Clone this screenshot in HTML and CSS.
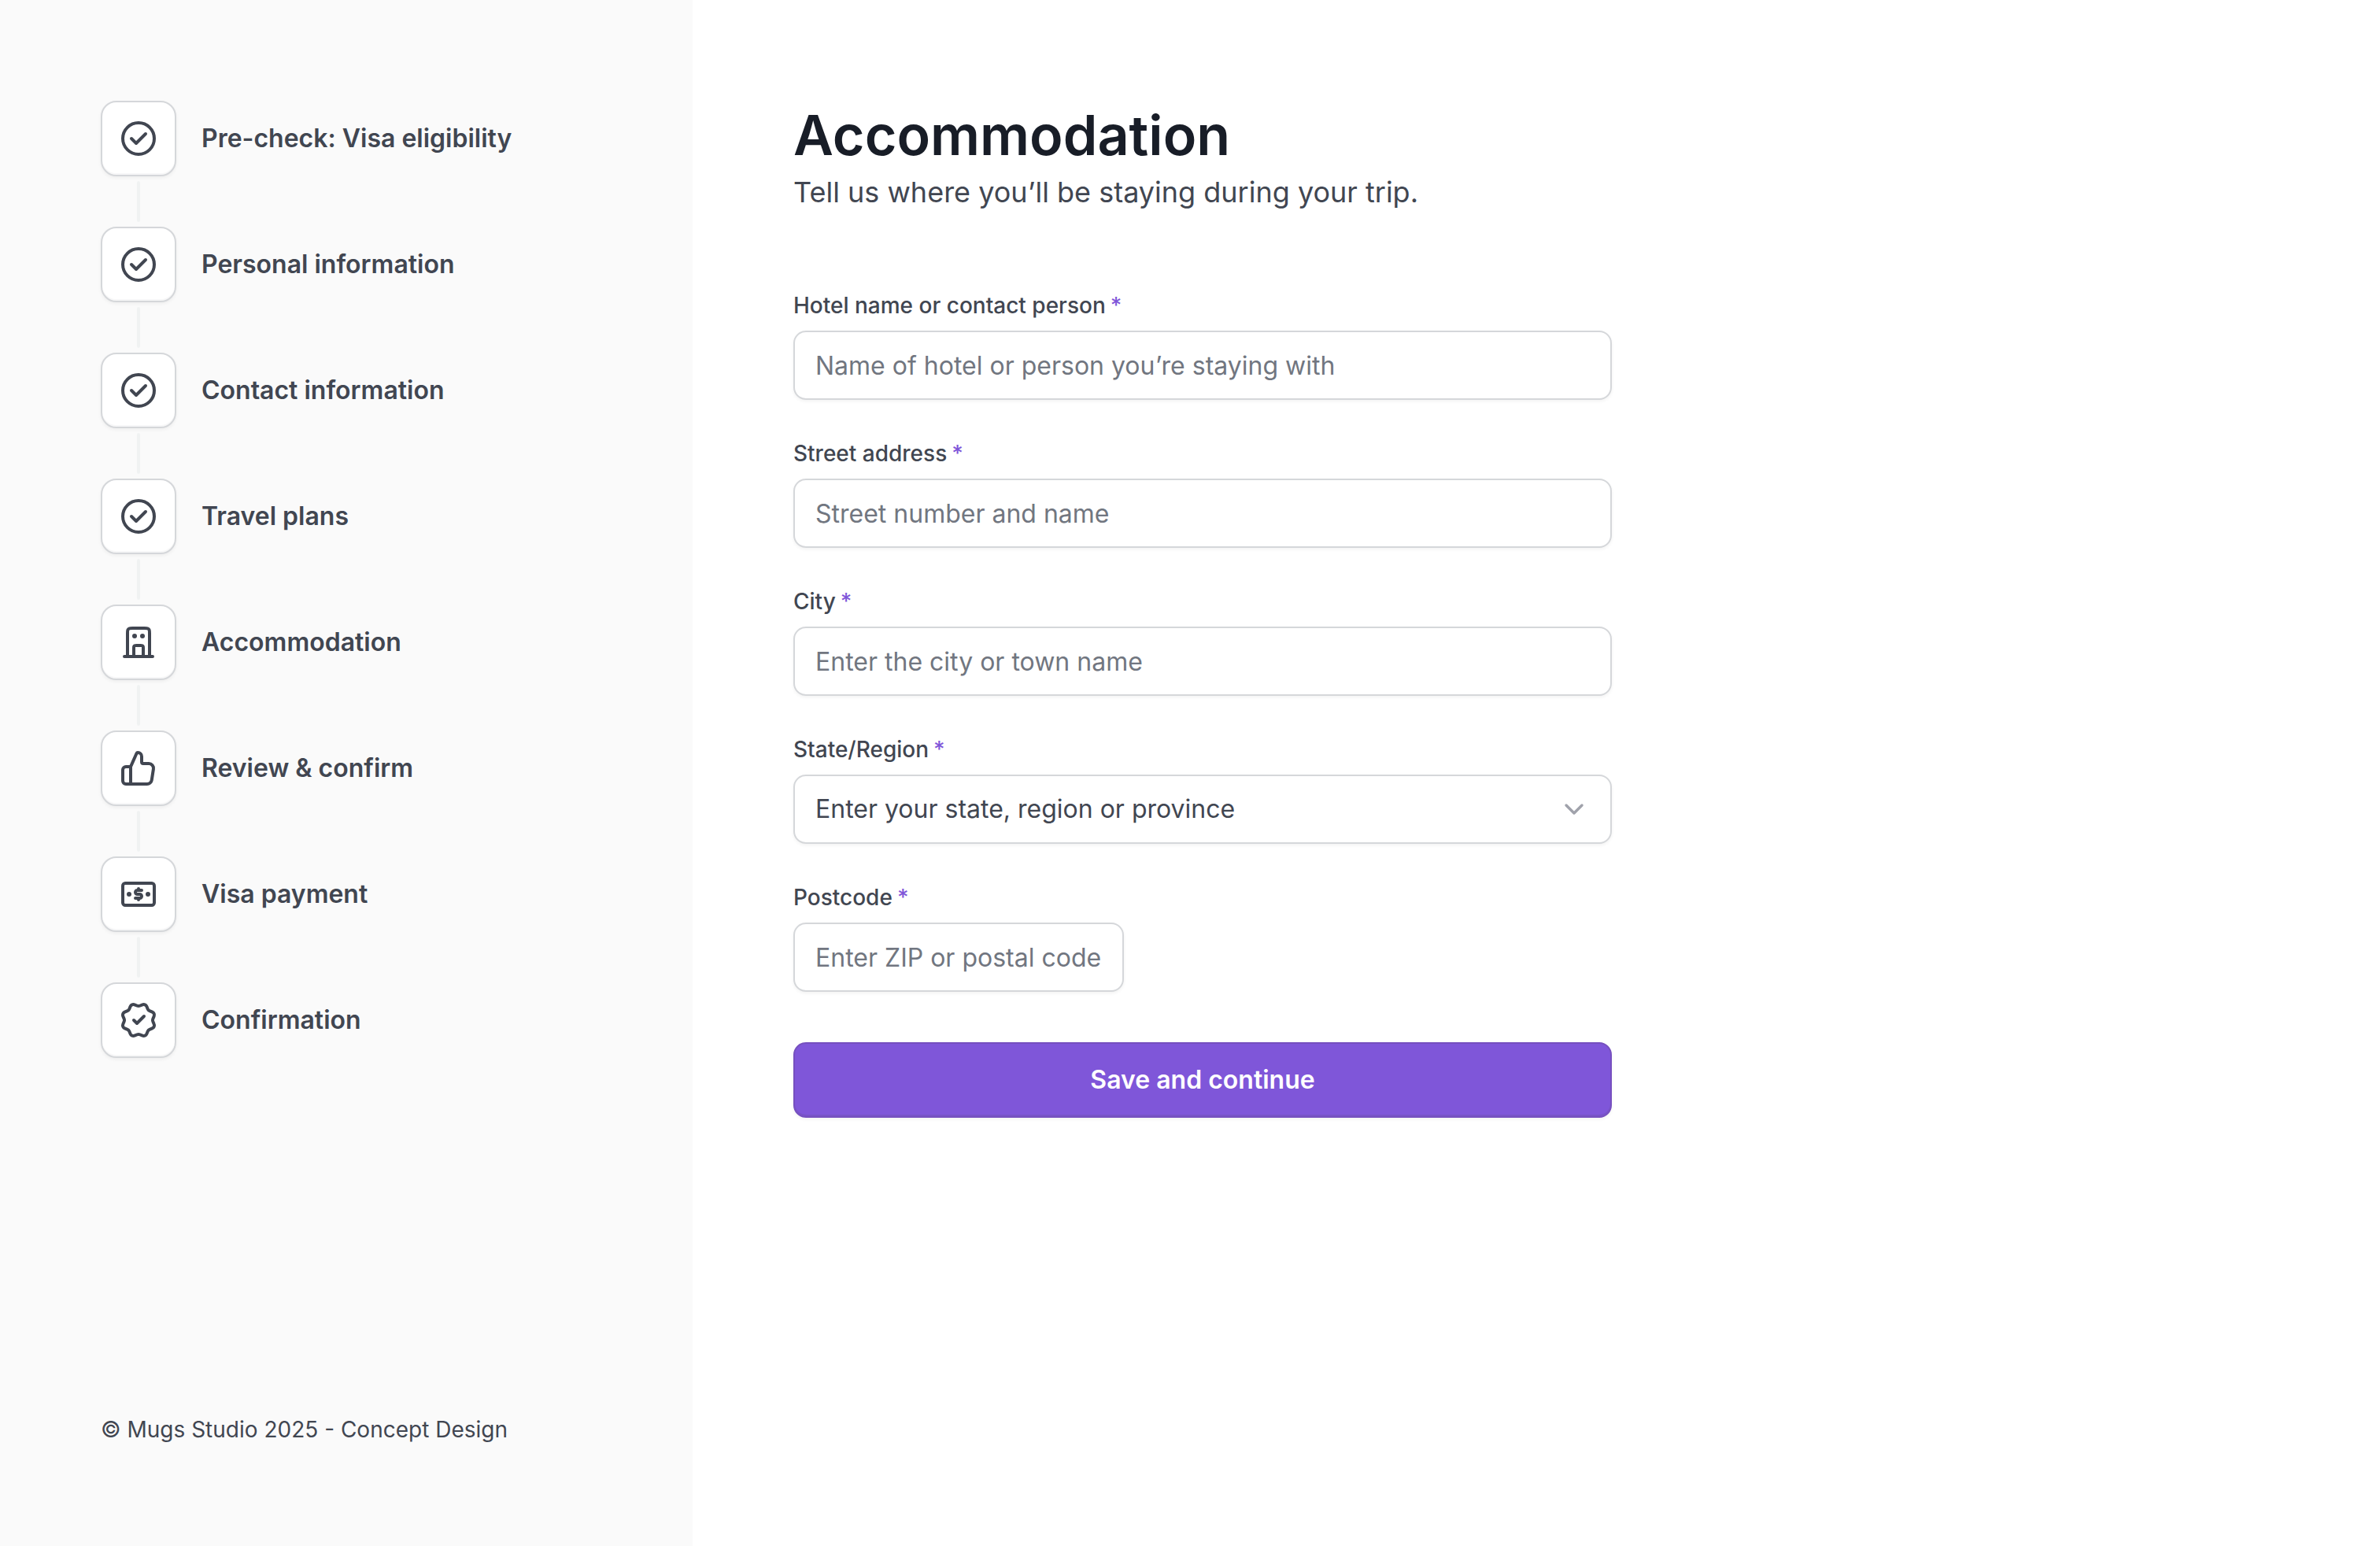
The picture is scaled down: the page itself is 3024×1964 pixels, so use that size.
FILE: index.html
```html
<!DOCTYPE html>
<html lang="en">
<head>
<meta charset="utf-8">
<meta name="viewport" content="width=device-width, initial-scale=1">
<title>Accommodation</title>
<link rel="stylesheet" href="styles.css">
</head>
<body>
<svg class="sprite" aria-hidden="true">
  <symbol id="check-circle" viewBox="0 0 24 24"><circle cx="12" cy="12" r="10"/><path d="M7.5 12l3 3 6-6"/></symbol>
  <symbol id="building" viewBox="0 0 24 24"><path d="M15 21v-5.4c0-.56 0-.84-.11-1.05a1 1 0 0 0-.44-.44C14.24 14 13.96 14 13.4 14h-2.8c-.56 0-.84 0-1.05.11a1 1 0 0 0-.44.44C9 14.76 9 15.04 9 15.6V21M19 21V6.2c0-1.12 0-1.68-.22-2.11a2 2 0 0 0-.87-.87C17.48 3 16.92 3 15.8 3H8.2c-1.12 0-1.68 0-2.11.22a2 2 0 0 0-.87.87C5 4.52 5 5.08 5 6.2V21M21 21H3"/><circle class="dot" cx="9.5" cy="8" r="1.5"/><circle class="dot" cx="14.5" cy="8" r="1.5"/></symbol>
  <symbol id="thumbs-up" viewBox="0 0 24 24"><path d="M7 22V11M2 13v7a2 2 0 0 0 2 2h13.43a3 3 0 0 0 2.96-2.54l1.08-7A3 3 0 0 0 18.5 9H15a1 1 0 0 1-1-1V4.47A2.47 2.47 0 0 0 11.53 2a.82.82 0 0 0-.75.49l-3.52 7.92A1 1 0 0 1 6.35 11H4a2 2 0 0 0-2 2z"/></symbol>
  <symbol id="bank-note" viewBox="0 0 24 24"><rect x="2" y="5" width="20" height="14" rx="1.6"/><path d="M14 9.5h-2.75a1.25 1.25 0 0 0 0 2.5h1.5a1.25 1.25 0 0 1 0 2.5H10M12 8.5v1M12 14.5v1"/><circle class="dot" cx="6" cy="12" r="1.5"/><circle class="dot" cx="18" cy="12" r="1.5"/></symbol>
  <symbol id="check-verified" viewBox="0 0 24 24"><path d="M9 12L11 14L15.5 9.5M17.9 5C18.11 5.5 18.5 5.89 19 6.1L20.75 6.82C21.24 7.03 21.64 7.42 21.85 7.92C22.05 8.42 22.05 8.98 21.85 9.48L21.12 11.22C20.92 11.72 20.92 12.28 21.12 12.78L21.84 14.52C21.95 14.77 22 15.03 22 15.3C22 15.57 21.95 15.83 21.84 16.08C21.74 16.32 21.59 16.55 21.4 16.74C21.22 16.93 20.99 17.08 20.74 17.18L19 17.9C18.5 18.11 18.11 18.5 17.9 19L17.18 20.75C16.97 21.24 16.58 21.64 16.08 21.85C15.58 22.05 15.02 22.05 14.52 21.85L12.78 21.12C12.28 20.92 11.72 20.92 11.22 21.12L9.48 21.85C8.98 22.05 8.42 22.05 7.92 21.85C7.42 21.64 7.03 21.24 6.82 20.75L6.1 19C5.89 18.5 5.5 18.11 5 17.9L3.26 17.18C2.76 16.97 2.36 16.58 2.16 16.08C1.95 15.58 1.95 15.02 2.16 14.52L2.88 12.78C3.08 12.28 3.08 11.72 2.88 11.22L2.15 9.48C2.05 9.23 2 8.97 2 8.7C2 8.43 2.05 8.17 2.15 7.92C2.26 7.67 2.41 7.45 2.6 7.26C2.78 7.07 3.01 6.92 3.26 6.82L5 6.1C5.5 5.89 5.89 5.5 6.1 5L6.82 3.25C7.03 2.76 7.42 2.36 7.92 2.15C8.42 1.95 8.98 1.95 9.48 2.15L11.22 2.88C11.72 3.08 12.28 3.08 12.78 2.88L14.52 2.16C15.02 1.95 15.58 1.95 16.08 2.16C16.58 2.36 16.97 2.76 17.18 3.26Z"/></symbol>
</svg>
<div class="page">
  <aside class="sidebar">
    <nav aria-label="Application steps">
      <ol class="steps">
        <li class="step"><span class="step-icon"><svg class="icon"><use href="#check-circle"/></svg></span><span class="step-label">Pre-check: Visa eligibility</span></li>
        <li class="step"><span class="step-icon"><svg class="icon"><use href="#check-circle"/></svg></span><span class="step-label">Personal information</span></li>
        <li class="step"><span class="step-icon"><svg class="icon"><use href="#check-circle"/></svg></span><span class="step-label">Contact information</span></li>
        <li class="step"><span class="step-icon"><svg class="icon"><use href="#check-circle"/></svg></span><span class="step-label">Travel plans</span></li>
        <li class="step" aria-current="step"><span class="step-icon"><svg class="icon"><use href="#building"/></svg></span><span class="step-label">Accommodation</span></li>
        <li class="step"><span class="step-icon"><svg class="icon"><use href="#thumbs-up"/></svg></span><span class="step-label">Review &amp; confirm</span></li>
        <li class="step"><span class="step-icon"><svg class="icon"><use href="#bank-note"/></svg></span><span class="step-label">Visa payment</span></li>
        <li class="step"><span class="step-icon"><svg class="icon"><use href="#check-verified"/></svg></span><span class="step-label">Confirmation</span></li>
      </ol>
    </nav>
    <footer class="copyright">© Mugs Studio 2025 - Concept Design</footer>
  </aside>
  <main class="main">
    <header>
      <h1 class="title">Accommodation</h1>
      <p class="subtitle">Tell us where you’ll be staying during your trip.</p>
    </header>
    <form class="form">
      <div class="field">
        <label class="label" for="hotel">Hotel name or contact person<span class="required">*</span></label>
        <input class="control" id="hotel" type="text" placeholder="Name of hotel or person you’re staying with">
      </div>
      <div class="field">
        <label class="label" for="street">Street address<span class="required">*</span></label>
        <input class="control" id="street" type="text" placeholder="Street number and name">
      </div>
      <div class="field">
        <label class="label" for="city">City<span class="required">*</span></label>
        <input class="control" id="city" type="text" placeholder="Enter the city or town name">
      </div>
      <div class="field">
        <label class="label" for="region">State/Region<span class="required">*</span></label>
        <div class="select-wrap">
          <select class="control select" id="region"><option>Enter your state, region or province</option></select>
          <svg class="chevron" viewBox="0 0 20 20" aria-hidden="true"><path d="M5 7.5l5 5 5-5"/></svg>
        </div>
      </div>
      <div class="field">
        <label class="label" for="postcode">Postcode<span class="required">*</span></label>
        <input class="control control-short" id="postcode" type="text" placeholder="Enter ZIP or postal code">
      </div>
      <button class="submit" type="submit">Save and continue</button>
    </form>
  </main>
</div>
</body>
</html>
```
FILE: styles.css
```css
*, *::before, *::after { box-sizing: border-box; }

body {
  margin: 0;
  background: #fff;
  color: #414651;
  font-family: Inter, "Liberation Sans", sans-serif;
  font-size: 32px;
  line-height: 48px;
}

.sprite { display: none; }

.page { display: flex; min-height: 100vh; }

.sidebar {
  display: flex;
  flex: 0 0 880px;
  flex-direction: column;
  justify-content: space-between;
  gap: 64px;
  padding: 128px;
  background: #fafafa;
}

.steps {
  display: flex;
  flex-direction: column;
  gap: 64px;
  margin: 0;
  padding: 0;
  list-style: none;
}

.step { display: flex; align-items: center; gap: 32px; }

.step-icon {
  position: relative;
  display: grid;
  place-items: center;
  width: 96px;
  height: 96px;
  border: 2px solid #d5d7da;
  border-radius: 20px;
  background: #fff;
  box-shadow: 0 2px 4px rgba(10, 13, 18, 0.05), inset 0 -2px 0 rgba(10, 13, 18, 0.03);
}

/* connector between two steps */
.step:not(:last-child) .step-icon::after {
  content: "";
  position: absolute;
  top: 100px;
  left: 44px;
  width: 4px;
  height: 52px;
  border-radius: 2px;
  background: #f0f2f2;
}

.icon {
  width: 48px;
  height: 48px;
  fill: none;
  stroke: #414651;
  stroke-width: 2;
  stroke-linecap: round;
  stroke-linejoin: round;
}

.dot { fill: #414651; stroke: none; }

.step-label { font-weight: 600; }

.copyright { font-size: 28px; line-height: 40px; }

.main { flex: 1; min-width: 0; padding: 128px; }

.title {
  margin: 0;
  color: #181d27;
  font-size: 70px;
  font-weight: 600;
  line-height: 88px;
}

.subtitle { margin: 0; font-size: 36px; line-height: 56px; }

.form {
  display: flex;
  flex-direction: column;
  gap: 48px;
  max-width: 1040px;
  margin-top: 96px;
}

.field { display: flex; flex-direction: column; gap: 12px; }

.label {
  display: flex;
  gap: 6px;
  font-size: 28px;
  font-weight: 500;
  line-height: 40px;
}

.required { color: #7f56d9; }

.control {
  width: 100%;
  height: 88px;
  padding: 0 26px;
  border: 2px solid #d5d7da;
  border-radius: 16px;
  background: #fff;
  box-shadow: 0 2px 4px rgba(10, 13, 18, 0.05);
  color: #414651;
  font: inherit;
}

.control::placeholder { color: #717680; opacity: 1; }

.control-short { width: 420px; }

.select-wrap { display: grid; align-items: center; }

.select, .chevron { grid-area: 1 / 1; }

.select { appearance: none; }

.chevron {
  justify-self: end;
  width: 40px;
  height: 40px;
  margin-right: 28px;
  fill: none;
  stroke: #a0a2ab;
  stroke-width: 1.7;
  stroke-linecap: round;
  stroke-linejoin: round;
  pointer-events: none;
}

.submit {
  height: 96px;
  margin-top: 16px;
  border: 2px solid #7650bf;
  border-radius: 16px;
  background: #7f56d9;
  box-shadow: 0 2px 4px rgba(10, 13, 18, 0.05), inset 0 -2px 0 #7853c8;
  color: #fff;
  font: inherit;
  font-weight: 600;
}
```
